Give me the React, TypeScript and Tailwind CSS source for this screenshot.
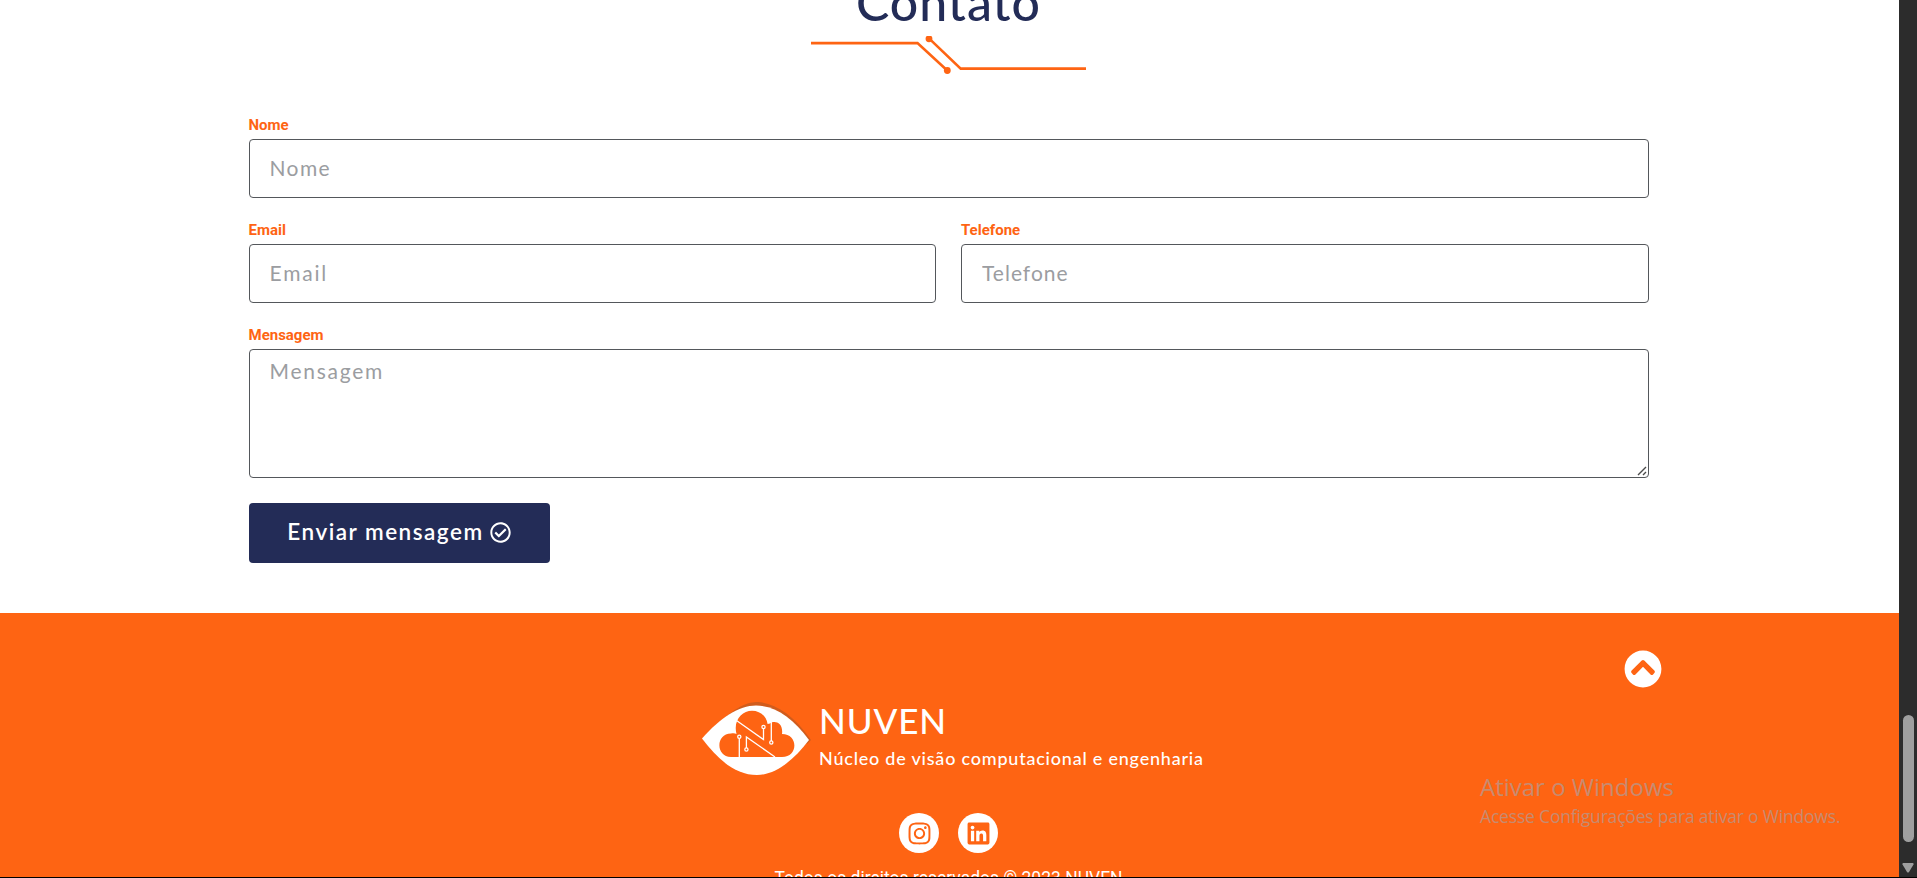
import { FaChevronCircleUp, FaInstagram, FaLinkedin, FaRegCheckCircle } from "react-icons/fa";

const field =
  "block w-full rounded-[4px] border border-[#54575b] bg-white px-5 font-[Lato,sans-serif] text-[21px] placeholder:text-[#9b9da1] outline-none";

function Label({ children }: { children: string }) {
  return <span className="block h-[29px] pt-[10px] text-[15px] font-bold leading-[10px] text-[#fe6413]">{children}</span>;
}

function Divider() {
  return (
    <svg className="mt-[5px] h-[40px] w-[276px]" viewBox="811 36 276 40" fill="none" stroke="#fe6413" strokeWidth="2.6">
      <path d="M811 43.1H917.5L947 70.3M929 38.4L960.7 68.6H1086" />
      <circle cx="929" cy="38.8" r="3.4" fill="#fe6413" stroke="none" />
      <circle cx="947.3" cy="70.5" r="3.4" fill="#fe6413" stroke="none" />
    </svg>
  );
}

function Logo() {
  return (
    <svg className="h-[76px] w-[112px] shrink-0" viewBox="0 0 112 76" fill="none">
      <path d="M22 20C38 6 48 2 58 2C75 3 94 15 111 40L107 44L56 8Z" fill="#d05c1d" />
      <path d="M2 38.500C20 18 39 5.500 56 5.500C75 5.500 93 18 109 40C93 61 75 75 57 75C36 75 19 61 2 38.500Z" fill="#fff" />
      <path d="M31 57C15.500 57 15.500 33.500 31 33.500C33 33 35 33 36.500 34C33 20 42 10.700 52 10.700C60 10.700 66.500 16 67.600 24L70 23.500C75 20 83.500 23 82 34C98.500 34 98.500 57 82 57Z" fill="#fe6413" />
      <g stroke="#fff" strokeWidth="1.300">
        <path d="M36.500 20.500L63.500 39.500V28.500M71.300 21V41M39.300 57V38M46.400 48.500V37L75 57" />
        <g fill="#fe6413">
          <circle cx="63.500" cy="27" r="1.600" />
          <circle cx="71.300" cy="42.500" r="1.600" />
          <circle cx="39.300" cy="36.700" r="1.600" />
          <circle cx="46.400" cy="49.500" r="1.600" />
        </g>
      </g>
    </svg>
  );
}

export default function App() {
  return (
    <div className="flex h-[878px] w-full flex-col overflow-hidden bg-white font-[Roboto,sans-serif]">
      <div className="flex min-h-0 flex-1">
        <main className="relative flex min-w-0 flex-1 flex-col overflow-hidden">
          <section className="flex h-[613px] shrink-0 flex-col pl-[248.5px] pr-[250.5px]">
            <div className="flex h-[110px] shrink-0 flex-col items-center">
              <h2 className="-mt-[28px] h-[59px] font-[Lato,sans-serif] text-[50px] font-medium leading-[60px] tracking-[1px] text-[#232c57]">Contato</h2>
              <Divider />
            </div>
            <form className="flex flex-col items-start">
              <label className="w-full"><Label>Nome</Label><input className={field + " h-[59px] pb-[3px] tracking-[1.4px]"} placeholder="Nome" /></label>
              <div className="mt-[17px] flex w-full gap-[25px]">
                <label className="flex-1"><Label>Email</Label><input className={field + " h-[59px] pb-[3px] tracking-[1.8px]"} placeholder="Email" /></label>
                <label className="flex-1"><Label>Telefone</Label><input className={field + " h-[59px] pb-[3px] tracking-[1px]"} placeholder="Telefone" /></label>
              </div>
              <label className="relative mt-[17px] w-full">
                <Label>Mensagem</Label>
                <textarea className={field + " h-[129px] resize-none py-[5px] leading-[31px] tracking-[1.75px]"} placeholder="Mensagem" />
                <svg className="absolute bottom-[2px] right-[2px] size-[10px]" viewBox="0 0 10 10" stroke="#4b4b4b" strokeWidth="1.4">
                  <path d="M1 9L9 1M6 9L9 6" />
                </svg>
              </label>
              <button type="button" className="mt-[25px] flex h-[60px] w-[301px] items-center justify-center gap-[6px] rounded-[4px] bg-[#232c57] pb-[2px] font-[Lato,sans-serif] text-[22.5px] font-semibold tracking-[1.5px] text-white">
                Enviar mensagem <FaRegCheckCircle className="size-[21px]" />
              </button>
            </form>
          </section>
          <footer className="flex flex-1 flex-col items-center overflow-hidden bg-[#fe6413] pt-[37px] text-white">
            <div className="flex h-[50px] w-full shrink-0 justify-end pr-[237px]"><FaChevronCircleUp className="size-[38px]" /></div>
            <div className="flex h-[76px] w-[500px] shrink-0 items-start">
              <Logo />
              <div className="flex flex-col pl-[7.5px] font-[Lato,sans-serif]">
                <span className="-mt-px h-[42px] whitespace-nowrap text-[35px] font-medium leading-[42px] tracking-[0.9px]">NUVEN</span>
                <span className="mt-[2px] whitespace-nowrap text-[18px] font-medium leading-[30px] tracking-[0.78px]">Núcleo de visão computacional e engenharia</span>
              </div>
            </div>
            <div className="mt-[37px] flex shrink-0 gap-[19px] pr-[2px] text-[#fe6413]">
              <a className="flex size-10 items-center justify-center rounded-full bg-white"><FaInstagram className="size-[25px]" /></a>
              <a className="flex size-10 items-center justify-center rounded-full bg-white"><FaLinkedin className="size-[25px]" /></a>
            </div>
            <p className="mt-[13px] shrink-0 whitespace-nowrap pr-[2px] text-[17.5px] leading-[24px]">Todos os direitos reservados © 2023 NUVEN</p>
          </footer>
          <div className="absolute left-[1480px] top-[770px] whitespace-nowrap font-['Open_Sans',sans-serif] text-[#c78b70]">
            <div className="text-[24px] leading-[34px]">Ativar o Windows</div>
            <div className="text-[17.5px] leading-[25px] tracking-[-0.18px]">Acesse Configurações para ativar o Windows.</div>
          </div>
        </main>
        <aside className="flex w-[18px] shrink-0 flex-col items-center bg-[#2c2c2c] pt-[715px]">
          <div className="h-[127px] w-[11px] rounded-full bg-[#9f9f9f]" />
          <svg className="mt-[21px] h-[10px] w-[12px]" viewBox="0 0 12 10"><path d="M1 0h10q1 .5.500 1.500L7 9q-1 1-2 0L.5 1.500Q0 .5 1 0Z" fill="#9f9f9f" /></svg>
        </aside>
      </div>
      <div className="h-px shrink-0 bg-black" />
    </div>
  );
}
